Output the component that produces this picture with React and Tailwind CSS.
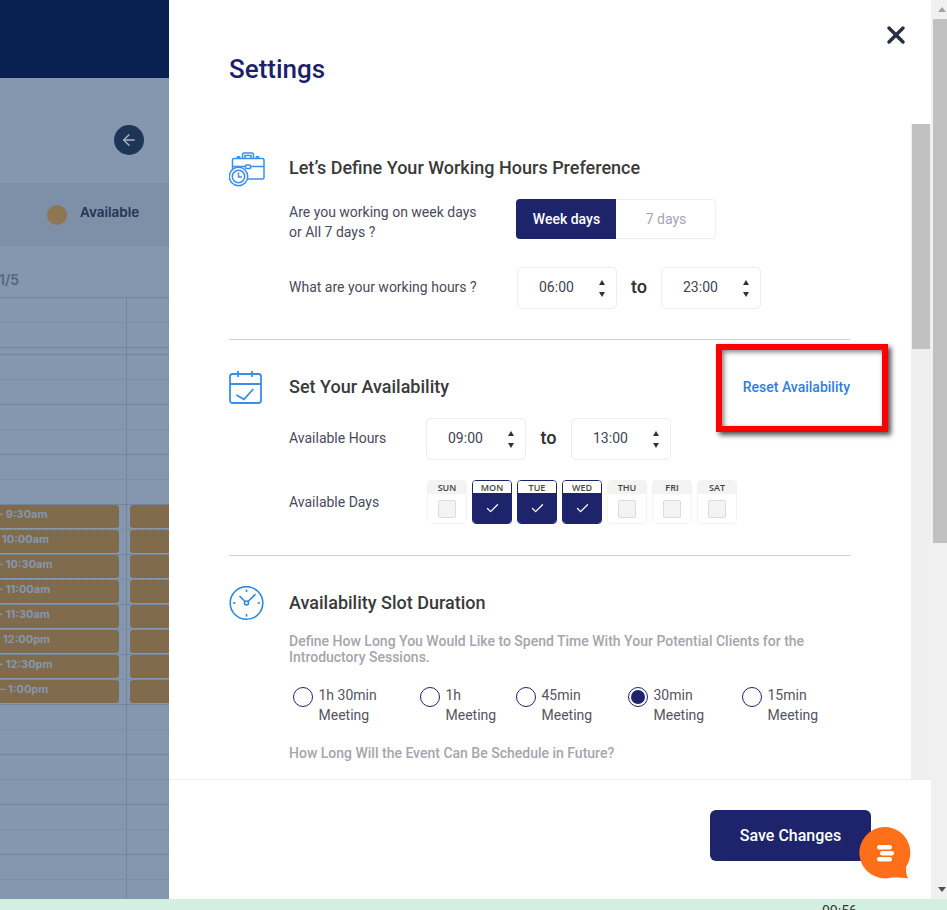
import React from 'react';
import { ArrowLeft, X, Check } from 'lucide-react';

const slots = [
  { text: '- 9:30am', cls: '-ml-[2px]' },
  { text: '10:00am', cls: 'ml-[2px]' },
  { text: '- 10:30am', cls: '-ml-[2px]' },
  { text: '- 11:00am', cls: '-ml-[2px]' },
  { text: '- 11:30am', cls: '-ml-[2px]' },
  { text: '12:00pm', cls: 'ml-[3px]' },
  { text: '- 12:30pm', cls: '-ml-[2px]' },
  { text: '– 1:00pm', cls: 'ml-0' },
];
const days = [
  { name: 'SUN', on: false },
  { name: 'MON', on: true },
  { name: 'TUE', on: true },
  { name: 'WED', on: true },
  { name: 'THU', on: false },
  { name: 'FRI', on: false },
  { name: 'SAT', on: false },
];
const durations = [
  { top: '1h 30min', w: 'w-[127px]' },
  { top: '1h', w: 'w-[96px]' },
  { top: '45min', w: 'w-[112px]' },
  { top: '30min', w: 'w-[114px]' },
  { top: '15min', w: 'w-[110px]' },
];

function TimeBox({ value }) {
  return (
    <div className="w-[100px] h-[42px] bg-white border border-[#ececec] rounded-[5px] flex items-center pl-[21px] pr-[11px] justify-between">
      <span className="text-[14px] text-[#3f4254] -mt-[2px]">{value}</span>
      <span className="flex flex-col gap-[7px]">
        <span className="w-0 h-0 border-x-[3px] border-x-transparent border-b-[5px] border-b-[#333]" />
        <span className="w-0 h-0 border-x-[3px] border-x-transparent border-t-[5px] border-t-[#333]" />
      </span>
    </div>
  );
}

function Day({ name, on }) {
  return (
    <div className={`w-[40px] h-[44px] rounded-[4px] overflow-hidden flex flex-col border ${on ? 'border-[#1e246b]' : 'border-[#f3f3f3]'}`}>
      <div className={`flex items-center justify-center pt-px text-[9px] font-semibold font-['Open_Sans',sans-serif] ${on ? 'h-[12px] bg-white text-[#444]' : 'h-[13px] bg-[#f3f3f3] text-[#444]'}`}>{name}</div>
      <div className={`flex-1 flex items-center justify-center ${on ? 'bg-[#1e246b]' : 'bg-white'}`}>
        {on ? (
          <Check className="w-[15px] h-[15px] text-white" strokeWidth={2} />
        ) : (
          <span className="w-[18px] h-[18px] bg-[#f3f3f3] border border-[#dcdcdc] rounded-[2px]" />
        )}
      </div>
    </div>
  );
}

function BriefcaseIcon() {
  return (
    <svg width="36" height="35" viewBox="0 0 36 35" fill="none" stroke="#3b8ee8" strokeWidth="1.5">
      <rect x="3.5" y="6.5" width="31.5" height="20.5" rx="1.5" fill="white" />
      <path d="M3.5 14.5H16.5M21.5 14.5H35" />
      <rect x="16.5" y="13" width="5" height="3.5" rx="0.8" />
      <path d="M13.5 6.5V2.5a1.5 1.5 0 0 1 1.5-1.5h8a1.5 1.5 0 0 1 1.5 1.5V6.5M16 6.5V3.5h6V6.5" />
      <path d="M8.5 6.5V4.8h2V6.5M27.5 6.5V4.8h2V6.5" />
      <circle cx="9.5" cy="24.5" r="9.2" fill="white" />
      <circle cx="9.5" cy="24.5" r="6.2" />
      <path d="M9.5 20.5V25H13" />
    </svg>
  );
}

function CalendarIcon() {
  return (
    <svg width="33" height="33" viewBox="0 0 33 33" fill="none" stroke="#3b8ee8" strokeWidth="1.8">
      <rect x="1" y="3" width="31" height="29" rx="2.5" />
      <path d="M1 13H32M9 0V6M23 0V6" />
      <path d="M7.3 24L15 28.3L24.3 18" />
    </svg>
  );
}

function ClockIcon() {
  return (
    <svg width="35" height="35" viewBox="0 0 35 35" fill="none" stroke="#2f86e6" strokeWidth="1.6">
      <circle cx="17.5" cy="17" r="16.3" />
      <circle cx="17.5" cy="17" r="2" />
      <path d="M16 15.5L10.5 10M19 15.5L26.5 8" />
      <path d="M17.5 3.5V6M17.5 28V30.5M4 17H6.5M28.5 17H31" />
    </svg>
  );
}

function Background() {
  return (
    <div className="w-[169px] h-[899px] shrink-0 bg-[#8497ae] flex flex-col overflow-hidden">
      <div className="h-[78px] bg-[#08204f] shrink-0" />
      <div className="h-[105px] shrink-0 flex items-center justify-end pr-[25px] pt-[19px]">
        <div className="w-[30px] h-[30px] rounded-full bg-[#1e3556] flex items-center justify-center">
          <ArrowLeft className="w-[18px] h-[18px] text-[#a8b4c6]" strokeWidth={1.8} />
        </div>
      </div>
      <div className="h-[63px] shrink-0 bg-[#7d90a8] flex items-center pl-[47px] gap-[13px]">
        <span className="w-5 h-5 rounded-full bg-[#8e7653]" />
        <span className="text-[13.5px] -mt-[4px] font-semibold text-[#1e3556] font-['Inter',sans-serif]">Available</span>
      </div>
      <div className="h-[51px] shrink-0 flex items-center text-[14px] font-semibold text-[#52677f] font-['Inter',sans-serif]">
        <span className="-ml-[1px] mt-[15px]">1/5</span>
      </div>
      <div className="relative flex-1 border-t border-[#72859d]">
        {/* day divider */}
        <div className="absolute left-[126px] top-0 bottom-0 w-px bg-[#72859d]" />
        <div className="h-[25px] border-b border-dotted border-[#72859d]" />
        <div className="h-[25px] border-b border-[#72859d]" />
        <div className="h-[7px] border-b border-[#72859d]" />
        {Array.from({ length: 22 }).map((_, i) => (
          <div key={i} className={`h-[25px] border-b border-[#72859d] ${i % 2 === 0 ? 'border-dotted' : 'border-solid'}`} />
        ))}
        <div className="absolute left-0 top-[207px] w-[119px] flex flex-col gap-[2px]">
          {slots.map((s) => (
            <div key={s.text} className="h-[23px] bg-[#806b4d] rounded-r-[3px] text-[11px] font-bold text-[#8497ae] flex items-center pb-[5px] font-['Inter',sans-serif]">
              <span className={s.cls}>{s.text}</span>
            </div>
          ))}
        </div>
        <div className="absolute left-[130px] right-0 top-[207px] flex flex-col gap-[2px]">
          {slots.map((s) => (
            <div key={s.text} className="h-[23px] bg-[#806b4d] rounded-l-[3px]" />
          ))}
        </div>
      </div>
    </div>
  );
}

export default function App() {
  return (
    <div className="relative w-[947px] h-[910px] overflow-hidden bg-white font-['Roboto',sans-serif]">
      <div className="flex h-[899px]">
        <Background />

        {/* settings panel */}
        <div className="w-[762px] shrink-0 flex flex-col bg-white relative">
          <div className="h-[124px] shrink-0 flex items-start justify-between pl-[60px] pr-[21px]">
            <h1 className="text-[26px] leading-[30px] mt-[54px] font-medium text-[#1e1f6b]">Settings</h1>
            <X className="w-[28px] h-[28px] mt-[21px] text-[#2b2f42]" strokeWidth={3} />
          </div>

          <div className="flex flex-1 min-h-0">
            <div className="w-[742px] pl-[60px] pr-[61px] overflow-hidden h-[656px] border-b border-[#f0f0f0]">
              {/* working hours */}
              <section className="h-[216px] border-b border-[#cfcfcf] relative">
                <div className="flex items-start h-[44px]">
                  <div className="w-[60px] shrink-0 pt-[28px]"><BriefcaseIcon /></div>
                  <h2 className="text-[18px] leading-[24px] mt-[32px] font-medium text-[#3a3a3a]">Let’s Define Your Working Hours Preference</h2>
                </div>
                <div className="flex h-[40px] pl-[60px] mt-[31px]">
                  <p className="w-[227px] text-[14px] leading-[20px] mt-[3px] text-[#4a4a5a]">Are you working on week days<br />or All 7 days ?</p>
                  <div className="flex w-[200px] h-[40px] rounded-[4px] border border-[#eeeeee]">
                    <div className="w-[100px] -ml-px -my-px pl-px h-[40px] bg-[#1e246b] rounded-l-[4px] flex items-center justify-center text-[14px] font-medium text-white">Week days</div>
                    <div className="flex-1 pl-px flex items-center justify-center text-[14px] text-[#a3a3b8]">7 days</div>
                  </div>
                </div>
                <div className="flex items-center pl-[60px] mt-[28px]">
                  <span className="w-[228px] text-[14px] text-[#4a4a5a] -mt-[2px]">What are your working hours ?</span>
                  <TimeBox value="06:00" />
                  <span className="w-[44px] text-center text-[17px] font-semibold text-[#333] font-['Inter',sans-serif] -mt-[1px]">to</span>
                  <TimeBox value="23:00" />
                </div>
              </section>

              {/* availability */}
              <section className="h-[216px] border-b border-[#cfcfcf]">
                <div className="flex items-start h-[64px]">
                  <div className="w-[60px] shrink-0 pt-[31px]"><CalendarIcon /></div>
                  <h2 className="text-[18px] leading-[24px] mt-[35px] font-medium text-[#3a3a3a]">Set Your Availability</h2>
                  <span className="ml-auto mt-[38px] text-[14px] leading-[18px] font-medium text-[#2f7de1]">Reset Availability</span>
                </div>
                <div className="flex items-center pl-[60px] mt-[14px]">
                  <span className="w-[137px] text-[14px] text-[#4a4a5a] -mt-[2px]">Available Hours</span>
                  <TimeBox value="09:00" />
                  <span className="w-[45px] text-center text-[17px] font-semibold text-[#333] font-['Inter',sans-serif] -mt-[1px]">to</span>
                  <TimeBox value="13:00" />
                </div>
                <div className="flex items-center pl-[60px] mt-[20px]">
                  <span className="w-[138px] text-[14px] text-[#4a4a5a]">Available Days</span>
                  <div className="flex gap-[5px]">
                    {days.map((d) => <Day key={d.name} {...d} />)}
                  </div>
                </div>
              </section>

              {/* slot duration */}
              <section>
                <div className="flex items-start h-[62px]">
                  <div className="w-[60px] shrink-0 pt-[30px]"><ClockIcon /></div>
                  <h2 className="text-[18px] leading-[24px] mt-[35px] font-medium text-[#3a3a3a]">Availability Slot Duration</h2>
                </div>
                <p className="pl-[60px] mt-[15px] text-[14px] leading-[16px] font-medium text-[#a5a5ad]">Define How Long You Would Like to Spend Time With Your Potential Clients for the Introductory Sessions.</p>
                <div className="flex pl-[64px] mt-[20px]">
                  {durations.map((d) => (
                    <div key={d.top} className={`${d.w} shrink-0 flex items-start gap-[5.5px]`}>
                      <span className="w-5 h-5 mt-[2px] rounded-full border border-[#1e246b] flex items-center justify-center shrink-0">
                        {d.top === '30min' && <span className="w-[14px] h-[14px] rounded-full bg-[#1e246b]" />}
                      </span>
                      <span className="text-[14px] leading-[20px] text-[#555560]">{d.top}<br />Meeting</span>
                    </div>
                  ))}
                </div>
                <p className="pl-[60px] mt-[18px] text-[14px] leading-[20px] font-medium text-[#a5a5ad]">How Long Will the Event Can Be Schedule in Future?</p>
              </section>
            </div>

            {/* inner scrollbar */}
            <div className="w-[20px] h-[656px] bg-[#efefef] px-[1px]">
              <div className="w-[18px] h-[225px] bg-[#c1c1c1]" />
            </div>
          </div>

          <div className="h-[119px] shrink-0 flex justify-end pr-[60px] pt-[30px] absolute left-0 right-0 bottom-0">
            <button className="w-[161px] h-[51px] bg-[#1e246b] rounded-[6px] text-white text-[16px] font-medium">Save Changes</button>
          </div>
        </div>

        {/* page scrollbar */}
        <div className="w-[16px] h-[899px] bg-[#f0f0f0] flex flex-col shrink-0">
          <div className="h-[19px] flex items-center justify-center pl-[5px] pb-[1px]">
            <span className="w-0 h-0 border-x-[4.5px] border-x-transparent border-b-[5px] border-b-[#a3a3a3]" />
          </div>
          <div className="h-[524px] bg-[#c1c1c1] ml-[2px]" />
          <div className="flex-1" />
          <div className="h-[19px] flex items-center justify-center pl-[5px]">
            <span className="w-0 h-0 border-x-[4.5px] border-x-transparent border-t-[5px] border-t-[#505050]" />
          </div>
        </div>
      </div>

      {/* page strip below the modal */}
      <div className="h-[11px] bg-[#d3efe2] relative overflow-hidden">
        <span className="absolute left-[822px] top-[5px] text-[14px] leading-[14px] text-[#333]">00:56</span>
      </div>

      {/* annotation box over reset link */}
      <div className="absolute left-[716px] top-[344px] w-[172px] h-[88px] border-[6px] border-[#ff0000] shadow-[3px_3px_5px_rgba(0,0,0,0.7),inset_2px_2px_5px_rgba(0,0,0,0.5)]" />

      {/* chat bubble */}
      <div className="absolute left-[859px] top-[827px] w-[52px] h-[52px]">
        <svg width="52" height="52" viewBox="0 0 52 52">
          <path d="M26 0a25.7 25.7 0 1 0 6 50.7c4 -.4 12 .3 17 .8 -1.4-3-2.3-7-2-11.5A25.7 25.7 0 0 0 26 0z" fill="#ff6f1a" />
          <rect x="18" y="18" width="15" height="4.5" rx="2.2" fill="white" />
          <rect x="21" y="24" width="14" height="4.5" rx="2.2" fill="white" />
          <rect x="18" y="30" width="15" height="4.5" rx="2.2" fill="white" />
        </svg>
      </div>
    </div>
  );
}
